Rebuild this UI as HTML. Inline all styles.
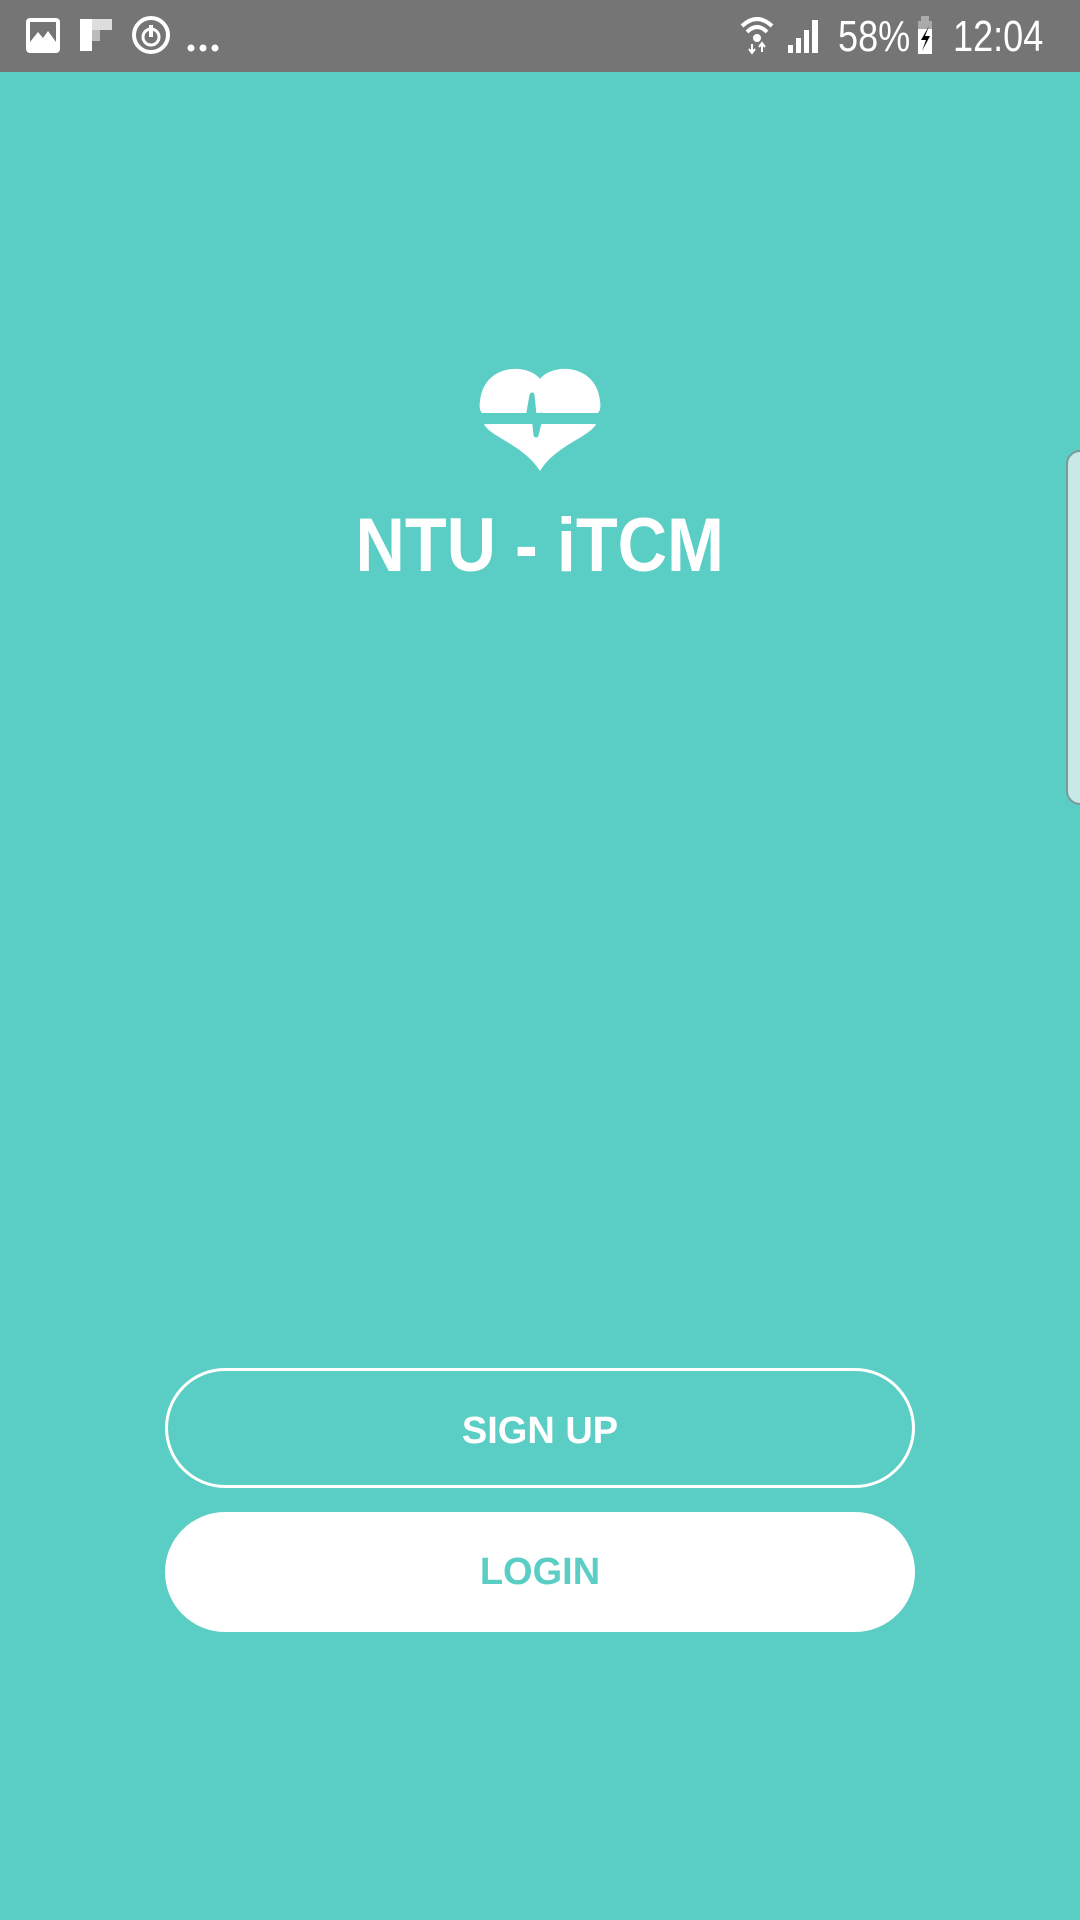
<!DOCTYPE html>
<html><head><meta charset="utf-8"><style>
html,body{margin:0;padding:0;width:1080px;height:1920px;overflow:hidden;background:#5acec5;font-family:"Liberation Sans",Roboto,sans-serif;}
.sb{position:absolute;left:0;top:0;width:1080px;height:72px;background:#757575;color:#fff;}
.t{position:absolute;font-size:44px;top:12px;transform:scaleX(0.82);transform-origin:left top;}
.title{position:absolute;left:0;width:1080px;top:502px;text-align:center;color:#fff;font-weight:bold;font-size:76px;}
.title span{display:inline-block;transform:scaleX(0.9);}
.btn{position:absolute;left:165px;width:750px;height:120px;border-radius:60px;box-sizing:border-box;text-align:center;line-height:120px;font-weight:bold;font-size:38px;}
.edge{position:absolute;left:1066px;top:450px;width:20px;height:355px;background:#c7eae7;border:2px solid #7a9a98;border-radius:14px 0 0 14px;box-sizing:border-box;}
</style></head><body>
<div class="sb">
<svg width="1080" height="72" style="position:absolute;left:0;top:0">
<rect x="26" y="18" width="34" height="35" rx="4" fill="#fff"/>
<rect x="30" y="22" width="26" height="20" fill="#757575"/>
<path d="M30 42 L38 32 L43 38 L48 31 L56 42 Z" fill="#fff"/>
<rect x="80" y="19" width="12" height="32" fill="#fff"/>
<rect x="92" y="19" width="20" height="11" fill="#ddd"/>
<rect x="92" y="30" width="8" height="11" fill="#bbb"/>
<circle cx="151" cy="35" r="17" fill="none" stroke="#fff" stroke-width="4"/>
<circle cx="151" cy="37" r="8" fill="none" stroke="#fff" stroke-width="3"/>
<rect x="149" y="25" width="4" height="12" fill="#fff"/>
<circle cx="191" cy="48" r="3.5" fill="#fff"/><circle cx="203" cy="48" r="3.5" fill="#fff"/><circle cx="215" cy="48" r="3.5" fill="#fff"/>
<path d="M742 26 Q757 12 772 26" stroke="#fff" stroke-width="4" fill="none"/>
<path d="M747 32 Q757 22 767 32" stroke="#fff" stroke-width="4" fill="none"/>
<circle cx="757" cy="38" r="4" fill="#fff"/>
<path d="M752 44v8M749 49l3 4 3-4M762 52v-8M759 47l3-4 3 4" stroke="#fff" stroke-width="2" fill="none"/>
<rect x="788" y="45" width="5" height="8" fill="#fff"/>
<rect x="796" y="38" width="5" height="15" fill="#fff"/>
<rect x="804" y="30" width="5" height="23" fill="#fff"/>
<rect x="812" y="20" width="6" height="33" fill="#fff"/>
<rect x="918" y="21" width="14" height="33" fill="#fff"/><rect x="921" y="16" width="8" height="5" fill="#aaa"/><rect x="918" y="21" width="14" height="8" fill="#aaa"/>
<path d="M929 26 L921 40 L926 40 L922 51 L930 36 L925 36 Z" fill="#000"/>
</svg>
<div class="t" style="left:838px">58%</div>
<div class="t" style="left:953px">12:04</div>
</div>
<svg style="position:absolute;left:478px;top:365px" width="124" height="108" viewBox="0 0 124 108">
<path d="M62 14 C50 -2 6 -2 2 36 C1 42 2 46 4 48 L120 48 C122 46 123 42 122 36 C118 -2 74 -2 62 14 Z" fill="#fff"/>
<path d="M6 59 L118 59 C112 72 78 80 62 106 C46 80 12 72 6 59 Z" fill="#fff"/>
<path d="M4 53 L50 53 L54 30 L58 70 L63 50 L68 54 L120 54" stroke="#5acec5" stroke-width="5" fill="none" stroke-linejoin="round"/>
</svg>
<div class="title"><span>NTU - iTCM</span></div>
<div class="edge"></div>
<div class="btn" style="top:1368px;border:3px solid #fff;color:#fff;">SIGN UP</div>
<div class="btn" style="top:1512px;background:#fff;color:#5acec5;">LOGIN</div>
</body></html>
